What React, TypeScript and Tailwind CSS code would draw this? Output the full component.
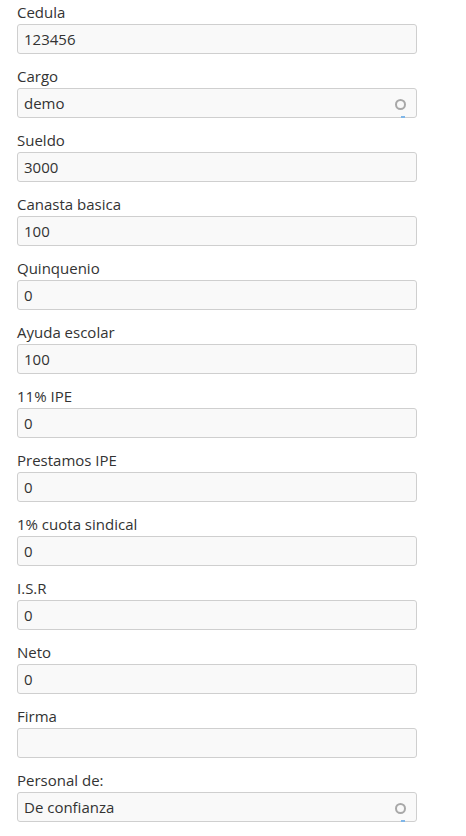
const fields: { label: string; value: string; select?: boolean }[] = [
  { label: "Cedula", value: "123456" },
  { label: "Cargo", value: "demo", select: true },
  { label: "Sueldo", value: "3000" },
  { label: "Canasta basica", value: "100" },
  { label: "Quinquenio", value: "0" },
  { label: "Ayuda escolar", value: "100" },
  { label: "11% IPE", value: "0" },
  { label: "Prestamos IPE", value: "0" },
  { label: "1% cuota sindical", value: "0" },
  { label: "I.S.R", value: "0" },
  { label: "Neto", value: "0" },
  { label: "Firma", value: "" },
  { label: "Personal de:", value: "De confianza", select: true },
];

const Field = ({ label, value, select }: { label: string; value: string; select?: boolean }) => {
  return (
    <div className="flex flex-col h-[64px]">
      <label className="h-[24px] leading-[24px] text-[15px] text-[#333]">{label}</label>
      <div className="relative w-[400px] h-[30px] rounded-[3px] border border-[#cfcfcf] bg-[#f9f9f9] flex items-center px-[6px] text-[15px] text-[#333]">
        <span>{value}</span>
        {select && (
          <>
            <span className="absolute right-[10px] top-[10px] w-[11px] h-[11px] rounded-full border-2 border-[#a8a8a8]" />
            <span className="absolute right-[11px] bottom-[-1px] w-[4px] h-[2px] bg-[#7fb6e8]" />
          </>
        )}
      </div>
    </div>
  );
};

const App = () => {
  return (
    <div className="w-[466px] h-[836px] bg-white pl-[17px] font-['Open_Sans',sans-serif] overflow-hidden">
      {fields.map((f) => (
        <Field key={f.label} {...f} />
      ))}
    </div>
  );
};

export default App;
